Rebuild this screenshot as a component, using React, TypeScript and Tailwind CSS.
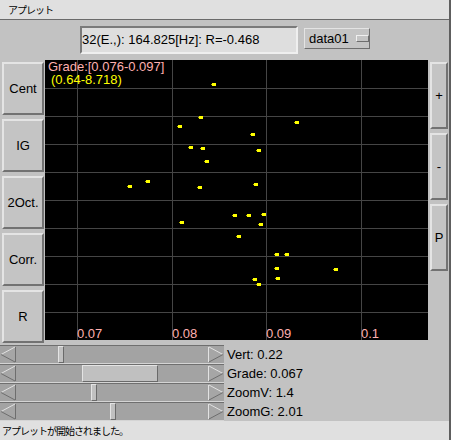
import React from 'react';

const dots: [number, number][] = [
  [213, 84], [200, 117], [179, 126], [296, 122], [252, 134], [190, 147], [202, 148],
  [258, 150], [206, 161], [147, 181], [129, 186], [199, 187], [255, 184], [181, 222],
  [234, 215], [248, 215], [263, 214], [260, 224], [238, 236], [276, 254], [286, 254],
  [276, 268], [335, 269], [254, 279], [277, 278], [258, 284],
];

const gridX = [32, 127, 221, 316];
const gridY = [28, 56, 84, 112, 140, 168, 196, 224, 252];

function SideButton({ label, tall }: { label: string; tall?: boolean }) {
  return (
    <div
      className={`${tall ? 'h-[67px]' : 'h-[53px]'} w-full flex items-center justify-center bg-[#c4c4c4] border-2 border-t-[#e4e4e4] border-l-[#e4e4e4] border-b-[#727272] border-r-[#727272] text-[13px] text-black`}
    >
      {label}
    </div>
  );
}

function LeftArrow() {
  return (
    <svg width="16" height="17" viewBox="0 0 16 17" className="shrink-0">
      <polygon points="1,8.5 15,1 15,16" fill="#a6a6a6" />
      <line x1="1" y1="8.5" x2="15" y2="1" stroke="#e2e2e2" strokeWidth="1" />
      <line x1="1" y1="8.5" x2="15" y2="16" stroke="#6e6e6e" strokeWidth="1" />
      <line x1="15.5" y1="1" x2="15.5" y2="16" stroke="#6e6e6e" strokeWidth="1" />
    </svg>
  );
}

function RightArrow() {
  return (
    <svg width="16" height="17" viewBox="0 0 16 17" className="shrink-0">
      <polygon points="15,8.5 1,1 1,16" fill="#a6a6a6" />
      <line x1="15" y1="8.5" x2="1" y2="1" stroke="#e2e2e2" strokeWidth="1" />
      <line x1="0.5" y1="1" x2="0.5" y2="16" stroke="#e2e2e2" strokeWidth="1" />
      <line x1="15" y1="8.5" x2="1" y2="16" stroke="#6e6e6e" strokeWidth="1" />
    </svg>
  );
}

function Slider({ thumb, label }: { thumb: string; label: string }) {
  return (
    <div className="h-[19px] flex items-center">
      <div className="relative w-[224px] h-[19px] flex items-center bg-[#a3a3a3] border-y border-t-[#6f6f6f] border-b-[#d4d4d4]">
        <LeftArrow />
        <div className="flex-1" />
        <RightArrow />
        <div
          className={`absolute top-0 bottom-0 bg-[#c0c0c0] border border-t-[#e4e4e4] border-l-[#e4e4e4] border-b-[#6a6a6a] border-r-[#6a6a6a] ${thumb}`}
        />
      </div>
      <span className="pl-[3px] text-[13px] text-black leading-[19px]">{label}</span>
    </div>
  );
}

export default function App() {
  return (
    <div
      className="w-[451px] h-[440px] bg-[#c2c2c2] border-r-2 border-[#5e5e5e] flex flex-col overflow-hidden"
      style={{ fontFamily: '"Liberation Sans", "Noto Sans CJK JP", sans-serif' }}
    >
      <div className="h-[20px] shrink-0 bg-[#e0e0e0] border-b border-[#6a6a6a] flex items-center pl-[8px]">
        <span className="text-[10px] tracking-[-1px] text-black" style={{ fontFamily: '"Noto Sans CJK JP", sans-serif' }}>
          アプレット
        </span>
      </div>

      <div className="h-[40px] shrink-0 flex items-start pl-[80px]">
        <div className="mt-[6px] w-[218px] h-[28px] bg-[#dedede] border-2 border-t-[#7a7a7a] border-l-[#7a7a7a] border-b-[#efefef] border-r-[#efefef] flex items-center text-[13px] text-black whitespace-nowrap">
          32(E.,): 164.825[Hz]: R=-0.468
        </div>
        <div className="mt-[8px] ml-[6px] w-[66px] h-[21px] bg-[#c4c4c4] border border-t-[#e4e4e4] border-l-[#e4e4e4] border-b-[#6e6e6e] border-r-[#6e6e6e] flex items-center pl-[4px] text-[13px] text-black">
          <span>data01</span>
          <div className="ml-[7px] w-[14px] h-[7px] bg-[#c4c4c4] border border-t-[#f0f0f0] border-l-[#f0f0f0] border-b-[#6e6e6e] border-r-[#6e6e6e]" />
        </div>
      </div>

      <div className="h-[285px] shrink-0 flex items-start">
        <div className="w-[42px] ml-[2px] mt-[2px] flex flex-col gap-[4px]">
          <SideButton label="Cent" />
          <SideButton label="IG" />
          <SideButton label="2Oct." />
          <SideButton label="Corr." />
          <SideButton label="R" />
        </div>

        <div className="relative ml-[1px] w-[383px] h-[280px] bg-black overflow-hidden">
          <svg width="383" height="280" className="absolute inset-0">
            {gridX.map((x) => (
              <line key={`x${x}`} x1={x + 0.5} y1="0" x2={x + 0.5} y2="280" stroke="#454545" strokeWidth="1" />
            ))}
            {gridY.map((y) => (
              <line key={`y${y}`} x1="0" y1={y + 0.5} x2="383" y2={y + 0.5} stroke="#454545" strokeWidth="1" />
            ))}
            {dots.map(([x, y], i) => (
              <g key={i}>
                <rect x={x - 45 - 1} y={y - 60 - 1} width="4" height="3" fill="#ffff00" />
                <rect x={x - 45 - 2} y={y - 60} width="1" height="1" fill="#b8b800" />
              </g>
            ))}
          </svg>
          <div className="absolute left-[3px] top-[1px] text-[13px] leading-[12px] text-[#ffb0b0] whitespace-nowrap">
            Grade:[0.076-0.097]
          </div>
          <div className="absolute left-[6px] top-[14px] text-[13px] leading-[12px] text-[#ffff00] whitespace-nowrap">
            (0.64-8.718)
          </div>
          <div className="absolute left-[32px] top-[268px] text-[13px] leading-[12px] text-[#ffb0b0]">0.07</div>
          <div className="absolute left-[127px] top-[268px] text-[13px] leading-[12px] text-[#ffb0b0]">0.08</div>
          <div className="absolute left-[221px] top-[268px] text-[13px] leading-[12px] text-[#ffb0b0]">0.09</div>
          <div className="absolute left-[316px] top-[268px] text-[13px] leading-[12px] text-[#ffb0b0]">0.1</div>
        </div>

        <div className="w-[18px] ml-[2px] mt-[2px] flex flex-col gap-[4px]">
          <SideButton label="+" tall />
          <SideButton label="-" tall />
          <SideButton label="P" tall />
        </div>
      </div>

      <div className="shrink-0 flex flex-col">
        <Slider thumb="left-[58px] w-[6px]" label="Vert: 0.22" />
        <Slider thumb="left-[82px] w-[76px]" label="Grade: 0.067" />
        <Slider thumb="left-[91px] w-[6px]" label="ZoomV: 1.4" />
        <Slider thumb="left-[110px] w-[6px]" label="ZoomG: 2.01" />
      </div>

      <div className="flex-1 bg-[#e0e0e0] flex items-center pl-[2px]">
        <span className="text-[10px] tracking-[-1px] text-black" style={{ fontFamily: '"Noto Sans CJK JP", sans-serif' }}>
          アプレットが開始されました。
        </span>
      </div>
    </div>
  );
}
